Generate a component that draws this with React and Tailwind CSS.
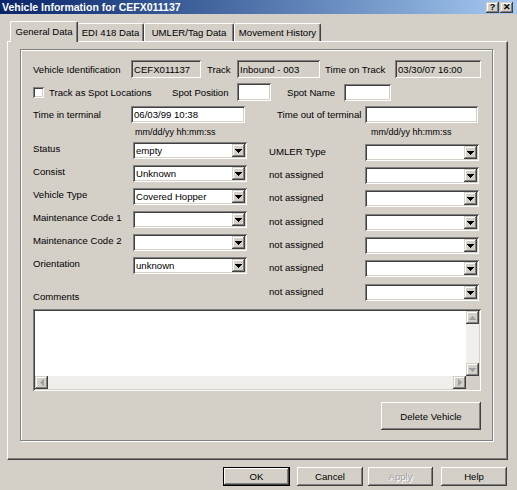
import React from "react";

const SUNKEN = "shadow-[inset_1px_1px_#808080,inset_-1px_-1px_#ffffff,inset_2px_2px_#404040,inset_-2px_-2px_#d4d0c8]";
const RAISED = "shadow-[inset_-1px_-1px_#404040,inset_1px_1px_#ffffff,inset_-2px_-2px_#808080,inset_2px_2px_#d4d0c8]";
const RAISED_SB = "shadow-[inset_-1px_-1px_#404040,inset_1px_1px_#d4d0c8,inset_-2px_-2px_#808080,inset_2px_2px_#ffffff]";

function Arrow({ dir = "down", color = "#000" }) {
  if (dir === "down")
    return (
      <svg width="7" height="4" viewBox="0 0 7 4" shapeRendering="crispEdges">
        <path d="M0 0h7v1H0zM1 1h5v1H1zM2 2h3v1H2zM3 3h1v1H3z" fill={color} />
      </svg>
    );
  if (dir === "up")
    return (
      <svg width="7" height="4" viewBox="0 0 7 4" shapeRendering="crispEdges">
        <path d="M0 3h7v1H0zM1 2h5v1H1zM2 1h3v1H2zM3 0h1v1H3z" fill={color} />
      </svg>
    );
  if (dir === "left")
    return (
      <svg width="4" height="7" viewBox="0 0 4 7" shapeRendering="crispEdges">
        <path d="M3 0h1v7H3zM2 1h1v5H2zM1 2h1v3H1zM0 3h1v1H0z" fill={color} />
      </svg>
    );
  return (
    <svg width="4" height="7" viewBox="0 0 4 7" shapeRendering="crispEdges">
      <path d="M0 0h1v7H0zM1 1h1v5H1zM2 2h1v3H2zM3 3h1v1H3z" fill={color} />
    </svg>
  );
}

function Combo({ value }) {
  return (
    <div className={"flex h-[17px] w-[114px] bg-white p-[2px] " + SUNKEN}>
      <div className="flex-1 overflow-hidden whitespace-nowrap pl-[1px] leading-[13px]">{value}</div>
      <div className={"flex h-[13px] w-[13px] items-center justify-center bg-[#d4d0c8] " + RAISED_SB}>
        <Arrow />
      </div>
    </div>
  );
}

function SbBtn({ dir }) {
  return (
    <div className={"flex h-[13px] w-[13px] shrink-0 items-center justify-center bg-[#d4d0c8] " + RAISED_SB}>
      <Arrow dir={dir} color="#a0a0a0" />
    </div>
  );
}

function Btn({ children, w, def, disabled, extra = "" }) {
  return (
    <div
      className={
        "flex h-[19px] items-center justify-center bg-[#d4d0c8] " +
        (def ? "border border-black shadow-[inset_-1px_-1px_#404040,inset_1px_1px_#ffffff,inset_-2px_-2px_#808080] " : RAISED + " ") +
        (disabled ? "text-[#a0a0a0] [text-shadow:1px_1px_0_#ffffff] " : "") +
        extra
      }
      style={{ width: w }}
    >
      {children}
    </div>
  );
}

export default function App() {
  const leftRows = [
    ["Status", "empty"],
    ["Consist", "Unknown"],
    ["Vehicle Type", "Covered Hopper"],
    ["Maintenance Code 1", ""],
    ["Maintenance Code 2", ""],
    ["Orientation", "unknown"],
  ];
  const rightRows = [
    ["UMLER Type", 23],
    ["not assigned", 23],
    ["not assigned", 24],
    ["not assigned", 23],
    ["not assigned", 23],
    ["not assigned", 24],
    ["not assigned", 23],
  ];

  return (
    <div className="relative h-[490px] w-[517px] overflow-hidden bg-[#d4d0c8] font-['Liberation_Sans',Arial,sans-serif] text-[9.6px] leading-[11px] text-black">
      {/* Title bar */}
      <div className="flex h-[14px] items-center justify-between bg-gradient-to-r from-[#0a246a] to-[#a6caf0] pl-[2px] pr-[4px]">
        <div className="text-[10.5px] font-bold leading-[14px] text-white">Vehicle Information for CEFX011137</div>
        <div className="flex gap-[1px]">
          <div className={"flex h-[11px] w-[13px] items-center justify-center bg-[#d4d0c8] text-[9px] font-bold leading-[9px] " + RAISED_SB}>?</div>
          <div className={"flex h-[11px] w-[13px] items-center justify-center bg-[#d4d0c8] text-[9px] font-bold leading-[9px] " + RAISED_SB}>✕</div>
        </div>
      </div>

      {/* Tabs */}
      <div className="relative z-10 mt-[6px] flex h-[21px] items-end pl-[10px]">
        <div className="-mb-[1px] flex h-[21px] w-[68px] items-center justify-center rounded-t-[2px] border-l border-t border-r border-white border-r-[#404040] bg-[#d4d0c8] pb-[2px] shadow-[inset_-1px_0_#808080]">
          General Data
        </div>
        <div className="flex h-[18px] w-[66px] items-center justify-center rounded-t-[2px] border-t border-r border-white border-r-[#404040] shadow-[inset_-1px_0_#808080]">
          EDI 418 Data
        </div>
        <div className="flex h-[18px] w-[90px] items-center justify-center rounded-t-[2px] border-l border-t border-r border-white border-r-[#404040] shadow-[inset_-1px_0_#808080]">
          UMLER/Tag Data
        </div>
        <div className="flex h-[18px] w-[87px] items-center justify-center rounded-t-[2px] border-l border-t border-r border-white border-r-[#404040] shadow-[inset_-1px_0_#808080]">
          Movement History
        </div>
      </div>

      {/* Panel */}
      <div className="ml-[7px] h-[419px] w-[501px] border border-white border-r-[#404040] border-b-[#404040] shadow-[inset_-1px_-1px_#808080]">
        <div className="ml-[12px] mt-[7px] h-[392px] w-[473px] border border-[#808080] pl-[12px] shadow-[1px_1px_0_#ffffff,inset_1px_1px_0_#ffffff]">
          {/* Row 1 */}
          <div className="mt-[10px] flex h-[18px] items-center">
            <div className="w-[98px]">Vehicle Identification</div>
            <div className={"flex h-[18px] w-[70px] items-center pl-[3px] " + SUNKEN}>CEFX011137</div>
            <div className="ml-[6px] w-[30px]">Track</div>
            <div className={"flex h-[18px] w-[83px] items-center pl-[3px] " + SUNKEN}>Inbound - 003</div>
            <div className="ml-[5px] w-[70px]">Time on Track</div>
            <div className={"flex h-[18px] w-[86px] items-center pl-[3px] " + SUNKEN}>03/30/07 16:00</div>
          </div>

          {/* Row 2 */}
          <div className="mt-[5px] flex h-[18px] items-center">
            <div className={"h-[11px] w-[11px] bg-white " + SUNKEN}></div>
            <div className="ml-[5px] w-[123px]">Track as Spot Locations</div>
            <div className="w-[65px]">Spot Position</div>
            <div className={"h-[18px] w-[34px] bg-white " + SUNKEN}></div>
            <div className="ml-[16px] w-[57px]">Spot Name</div>
            <div className={"h-[17px] w-[47px] bg-white " + SUNKEN}></div>
          </div>

          {/* Row 3 */}
          <div className="mt-[5px] flex h-[17px] items-center">
            <div className="w-[98px]">Time in terminal</div>
            <div className={"flex h-[17px] w-[114px] items-center bg-white pl-[3px] " + SUNKEN}>06/03/99 10:38</div>
            <div className="ml-[32px] w-[88px]">Time out of terminal</div>
            <div className={"h-[17px] w-[113px] bg-white " + SUNKEN}></div>
          </div>

          {/* Row 4 hints */}
          <div className="mt-[4px] flex h-[11px] items-center text-[9px]">
            <div className="ml-[102px] w-[236px]">mm/dd/yy hh:mm:ss</div>
            <div>mm/dd/yy hh:mm:ss</div>
          </div>

          {/* Columns */}
          <div className="mt-[4px] flex h-[167px] items-start">
            <div className="w-[236px]">
              {leftRows.map(([l, v], i) => (
                <div key={i} className="flex h-[23px] items-start">
                  <div className="w-[100px] pt-[1px]">{l}</div>
                  <Combo value={v} />
                </div>
              ))}
              <div className="mt-[11px]">Comments</div>
            </div>
            <div className="pt-[2px]">
              {rightRows.map(([l, h], i) => (
                <div key={i} className="flex items-start" style={{ height: h }}>
                  <div className="w-[96px] pt-[2px]">{l}</div>
                  <Combo value="" />
                </div>
              ))}
            </div>
          </div>

          {/* Comments textarea */}
          <div className={"flex h-[82px] w-[448px] flex-col bg-white p-[2px] " + SUNKEN}>
            <div className="flex flex-1">
              <div className="flex-1"></div>
              <div className="flex w-[13px] flex-col bg-[#f0efeb]">
                <SbBtn dir="up" />
                <div className="flex-1"></div>
                <SbBtn dir="down" />
              </div>
            </div>
            <div className="flex h-[13px]">
              <div className="flex flex-1 bg-[#f0efeb]">
                <SbBtn dir="left" />
                <div className="flex-1"></div>
                <SbBtn dir="right" />
              </div>
              <div className="h-[13px] w-[13px] bg-[#d4d0c8]"></div>
            </div>
          </div>

          {/* Delete Vehicle */}
          <div className="mt-[11px] flex w-[448px] justify-end">
            <div className={"flex h-[28px] w-[100px] items-center justify-center bg-[#d4d0c8] " + RAISED}>Delete Vehicle</div>
          </div>
        </div>
      </div>

      {/* Bottom buttons */}
      <div className="mt-[7px] flex pl-[223px]">
        <Btn w={67} def>OK</Btn>
        <Btn w={66} extra="ml-[7px]">Cancel</Btn>
        <Btn w={65} disabled extra="ml-[5px]">Apply</Btn>
        <Btn w={66} extra="ml-[8px]">Help</Btn>
      </div>
    </div>
  );
}
